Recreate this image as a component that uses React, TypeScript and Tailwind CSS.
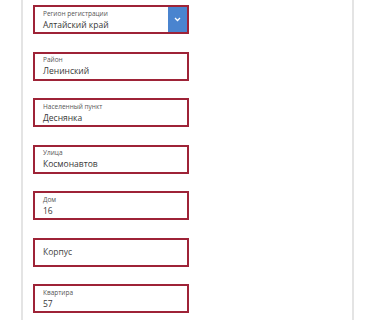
const fields = [
  { label: "Район", value: "Ленинский" },
  { label: "Населенный пункт", value: "Деснянка" },
  { label: "Улица", value: "Космонавтов" },
  { label: "Дом", value: "16" },
  { label: "Корпус", value: "" },
  { label: "Квартира", value: "57" },
];

function Field({ label, value }: { label: string; value: string }) {
  if (!value) {
    return (
      <div className="h-[29px] w-[156px] border-2 border-[#9e2337] flex items-center pl-[8px]">
        <span className="text-[8.5px] text-[#444]">{label}</span>
      </div>
    );
  }
  return (
    <div className="h-[29px] w-[156px] border-2 border-[#9e2337] flex flex-col justify-center pl-[8px]">
      <span className="text-[6.5px] leading-[9px] text-[#555]">{label}</span>
      <span className="text-[8.5px] leading-[13px] text-[#383838]">{value}</span>
    </div>
  );
}

export default function App() {
  return (
    <div className="h-[320px] w-[387px] bg-white overflow-hidden font-['Open_Sans',sans-serif]">
      <div className="ml-[21px] w-[333px] h-full border-l-2 border-r-2 border-[#e4e4e4] pl-[10px] pt-[5px] flex flex-col gap-[17.5px]">
        {/* Region select */}
        <div className="h-[29px] w-[156px] border-2 border-[#9e2337] flex">
          <div className="flex-1 flex flex-col justify-center pl-[8px]">
            <span className="text-[6.5px] leading-[9px] text-[#555]">Регион регистрации</span>
            <span className="text-[8.5px] leading-[13px] text-[#383838]">Алтайский край</span>
          </div>
          <div className="w-[19px] bg-[#4a84cf] flex items-center justify-center">
            <svg width="7" height="5" viewBox="0 0 7 5" fill="none">
              <path d="M1 1l2.5 2.5L6 1" stroke="white" strokeWidth="1.3" />
            </svg>
          </div>
        </div>
        {fields.map((f) => (
          <Field key={f.label} label={f.label} value={f.value} />
        ))}
      </div>
    </div>
  );
}
